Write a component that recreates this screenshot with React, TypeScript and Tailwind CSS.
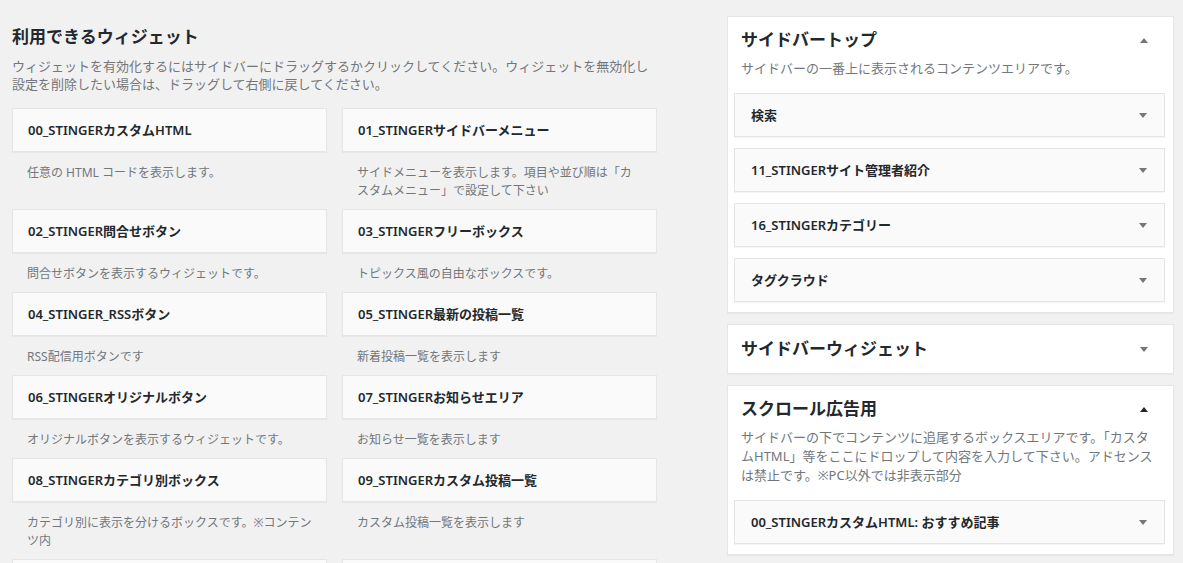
const font = { fontFamily: '"Noto Sans", "Noto Sans CJK JP", sans-serif' }

type Widget = { name: string; desc: string }

const widgets: Widget[] = [
  { name: '00_STINGERカスタムHTML', desc: '任意の HTML コードを表示します。' },
  { name: '01_STINGERサイドバーメニュー', desc: 'サイドメニューを表示します。項目や並び順は「カスタムメニュー」で設定して下さい' },
  { name: '02_STINGER問合せボタン', desc: '問合せボタンを表示するウィジェットです。' },
  { name: '03_STINGERフリーボックス', desc: 'トピックス風の自由なボックスです。' },
  { name: '04_STINGER_RSSボタン', desc: 'RSS配信用ボタンです' },
  { name: '05_STINGER最新の投稿一覧', desc: '新着投稿一覧を表示します' },
  { name: '06_STINGERオリジナルボタン', desc: 'オリジナルボタンを表示するウィジェットです。' },
  { name: '07_STINGERお知らせエリア', desc: 'お知らせ一覧を表示します' },
  { name: '08_STINGERカテゴリ別ボックス', desc: 'カテゴリ別に表示を分けるボックスです。※コンテンツ内' },
  { name: '09_STINGERカスタム投稿一覧', desc: 'カスタム投稿一覧を表示します' },
  { name: '', desc: '' },
  { name: '', desc: '' },
]

function Arrow({ up = false, dark = false }: { up?: boolean; dark?: boolean }) {
  return (
    <svg width="8" height="5" viewBox="0 0 8 5" className="shrink-0">
      <polygon
        points={up ? '0,5 8,5 4,0' : '0,0 8,0 4,5'}
        fill={dark ? '#23282d' : '#72777c'}
      />
    </svg>
  )
}

function WidgetCard({ w }: { w: Widget }) {
  return (
    <div>
      <div className="h-[44px] flex items-center px-[15px] pt-[2px] bg-[#fafafa] border border-[#e5e5e5] shadow-[0_1px_1px_rgba(0,0,0,0.04)] text-[13px] font-semibold text-[#23282d]">
        {w.name}
      </div>
      {w.desc && (
        <p className="px-[15px] pt-[12px] pb-[9px] text-[12px] leading-[18px] text-[#72777c]">
          {w.desc}
        </p>
      )}
    </div>
  )
}

function InnerWidget({ name }: { name: string }) {
  return (
    <div className="h-[44px] flex items-center justify-between pl-[16px] pr-[17px] bg-[#fafafa] border border-[#e5e5e5] shadow-[0_1px_1px_rgba(0,0,0,0.04)] text-[13px] font-semibold text-[#23282d]">
      <span className="pt-[2px]">{name}</span>
      <Arrow />
    </div>
  )
}

function Sidebar({
  title,
  desc,
  items,
  open,
  dark,
}: {
  title: string
  desc?: string
  items?: string[]
  open?: boolean
  dark?: boolean
}) {
  return (
    <div className="bg-white border border-[#e5e5e5] shadow-[0_1px_1px_rgba(0,0,0,0.04)]">
      <div
        className={`flex items-center justify-between pl-[13px] pr-[25px] ${
          open ? 'pt-[11px] pb-[11px]' : 'pt-[12px] pb-[12px]'
        }`}
      >
        <h2 className="text-[17px] leading-[24px] font-bold text-[#23282d]">{title}</h2>
        <Arrow up={open} dark={dark} />
      </div>
      {open && (
        <div className="-mt-[4px] pb-[10px]">
          <p className="px-[13px] text-[13px] leading-[19px] text-[#72777c]">{desc}</p>
          <div className="mt-[15px] pl-[6px] pr-[8px] flex flex-col gap-[11px]">
            {items?.map((n) => (
              <InnerWidget key={n} name={n} />
            ))}
          </div>
        </div>
      )}
    </div>
  )
}

export default function App() {
  return (
    <div className="min-h-screen h-[563px] overflow-hidden bg-[#f1f1f1] flex" style={font}>
      <div className="pl-[12px] w-[657px] shrink-0">
        <h2 className="mt-[25px] text-[17px] leading-[24px] font-bold text-[#23282d]">
          利用できるウィジェット
        </h2>
        <p className="mt-[8px] text-[13px] leading-[18px] text-[#72777c] whitespace-nowrap">
          ウィジェットを有効化するにはサイドバーにドラッグするかクリックしてください。ウィジェットを無効化し
          <br />
          設定を削除したい場合は、ドラッグして右側に戻してください。
        </p>
        <div className="mt-[15px] grid grid-cols-[315px_315px] gap-x-[15px]">
          {widgets.map((w, i) => (
            <WidgetCard key={i} w={w} />
          ))}
        </div>
      </div>
      <div className="ml-[70px] w-[447px] pt-[16px] flex flex-col gap-[11px]">
        <Sidebar
          title="サイドバートップ"
          desc="サイドバーの一番上に表示されるコンテンツエリアです。"
          items={['検索', '11_STINGERサイト管理者紹介', '16_STINGERカテゴリー', 'タグクラウド']}
          open
        />
        <Sidebar title="サイドバーウィジェット" />
        <Sidebar
          title="スクロール広告用"
          desc="サイドバーの下でコンテンツに追尾するボックスエリアです。「カスタムHTML」等をここにドロップして内容を入力して下さい。アドセンスは禁止です。※PC以外では非表示部分"
          items={['00_STINGERカスタムHTML: おすすめ記事']}
          open
          dark
        />
      </div>
    </div>
  )
}
